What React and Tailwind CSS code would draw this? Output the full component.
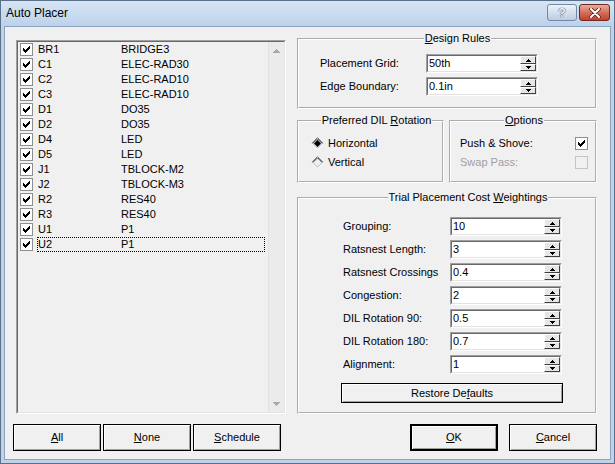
import React from 'react'

const PARTS = [
  ['BR1', 'BRIDGE3'],
  ['C1', 'ELEC-RAD30'],
  ['C2', 'ELEC-RAD10'],
  ['C3', 'ELEC-RAD10'],
  ['D1', 'DO35'],
  ['D2', 'DO35'],
  ['D4', 'LED'],
  ['D5', 'LED'],
  ['J1', 'TBLOCK-M2'],
  ['J2', 'TBLOCK-M3'],
  ['R2', 'RES40'],
  ['R3', 'RES40'],
  ['U1', 'P1'],
  ['U2', 'P1'],
]

const WEIGHTS = [
  ['Grouping:', '10'],
  ['Ratsnest Length:', '3'],
  ['Ratsnest Crossings', '0.4'],
  ['Congestion:', '2'],
  ['DIL Rotation 90:', '0.5'],
  ['DIL Rotation 180:', '0.7'],
  ['Alignment:', '1'],
]

const CHECK_PX = [[6, 0, 1], [5, 1, 2], [0, 2, 1], [4, 2, 3], [0, 3, 2], [3, 3, 3], [0, 4, 5], [1, 5, 3], [2, 6, 1]]
const UP_PX = [[2, 0, 1], [1, 1, 3], [0, 2, 5]]
const DOWN_PX = [[0, 0, 5], [1, 1, 3], [2, 2, 1]]

function Pixels({ rows, w, h, color }) {
  return (
    <svg width={w} height={h} shapeRendering="crispEdges" className="block">
      {rows.map(([x, y, wd], i) => (
        <rect key={i} x={x} y={y} width={wd} height={1} fill={color} />
      ))}
    </svg>
  )
}

function Check({ checked, disabled }) {
  return (
    <span
      className={`flex h-[13px] w-[13px] shrink-0 items-center justify-center border ${
        disabled ? 'border-[#c4c4c4] bg-[#f0f0f0]' : 'border-[#8e8f8f] bg-white'
      }`}
    >
      {checked && <Pixels rows={CHECK_PX} w={7} h={7} color="#000" />}
    </span>
  )
}

function Radio({ checked }) {
  return (
    <svg width="13" height="13" viewBox="0 0 13 13" className="block shrink-0">
      <path d="M0.5 6.5 L6.5 0.5 L12.5 6.5" fill="none" stroke="#8a8a8a" />
      <path d="M1.8 6.5 L6.5 1.8 L11.2 6.5" fill="none" stroke="#303030" />
      <path d="M0.5 6.5 L6.5 12.5 L12.5 6.5" fill="none" stroke="#ffffff" />
      <path d="M1.8 6.5 L6.5 11.2 L11.2 6.5" fill="none" stroke="#b4b4b4" />
      {checked && <path d="M6.5 3 L10 6.5 L6.5 10 L3 6.5 Z" fill="#000" />}
    </svg>
  )
}

function Spin() {
  return (
    <div className="flex w-[16px] shrink-0 flex-col">
      <div className="flex h-[8px] items-center justify-center border border-t-white border-l-white border-b-[#404040] border-r-[#404040] bg-[#e6e6e6]">
        <Pixels rows={UP_PX} w={5} h={3} color="#000" />
      </div>
      <div className="flex h-[7px] items-center justify-center border border-t-white border-l-white border-b-[#404040] border-r-[#404040] bg-[#e6e6e6]">
        <Pixels rows={DOWN_PX} w={5} h={3} color="#000" />
      </div>
    </div>
  )
}

function SpinEdit({ value }) {
  return (
    <div className="h-[19px] w-[112px] shrink-0 border border-t-[#a0a0a0] border-l-[#a0a0a0] border-b-white border-r-white">
      <div className="flex h-full border border-t-[#696969] border-l-[#696969] border-b-[#e3e3e3] border-r-[#e3e3e3] bg-white">
        <span className="flex-1 pl-[1px] leading-[15px]">{value}</span>
        <Spin />
      </div>
    </div>
  )
}

function Button({ children, className = '', isDefault }) {
  return (
    <button
      className={`flex items-center justify-center border-black bg-[#f0f0f0] font-normal leading-[13px] shadow-[inset_1px_1px_0_#fff,inset_-1px_-1px_0_#a0a0a0] ${
        isDefault ? 'border-2' : 'border'
      } ${className}`}
    >
      {children}
    </button>
  )
}

function Group({ title, className = '', children }) {
  return (
    <fieldset className={`min-w-0 [border:2px_groove_#ffffff] ${className}`}>
      <legend className="mx-auto bg-[#f0f0f0] px-[1px] font-normal leading-[13px]">{title}</legend>
      {children}
    </fieldset>
  )
}

export default function App() {
  return (
    <div className="flex h-[464px] w-[615px] flex-col overflow-hidden border border-[#5a6f88] bg-[#bed3ea] font-['Liberation_Sans',Arial,sans-serif] text-[11px] text-black">
      {/* Title bar */}
      <div className="flex h-[25px] shrink-0 items-start bg-gradient-to-b from-[#d6e5f5] to-[#bcd2ea]">
        <span className="pl-[5px] pt-[5px] text-[12px] leading-[14px]">Auto Placer</span>
        <div className="ml-auto mr-[4px] mt-[3px] flex gap-[2px]">
          <div className="flex h-[17px] w-[30px] items-center justify-center rounded-[3px] border border-[#7388a4] bg-gradient-to-b from-[#eef3f9] via-[#d3dfed] to-[#bccde3]">
            <span className="text-[13px] font-bold leading-[13px] text-[#eef3f8] [text-shadow:0_0_1px_#2d3e55,0_0_1px_#2d3e55]">?</span>
          </div>
          <div className="flex h-[17px] w-[31px] items-center justify-center rounded-[3px] border border-[#6e2a1f] bg-gradient-to-b from-[#e9ab9e] via-[#d56f5b] to-[#c4402a]">
            <svg width="12" height="10" viewBox="0 0 12 10">
              <path d="M2 1 L10 9 M10 1 L2 9" stroke="#5b1f15" strokeWidth="3.6" strokeLinecap="round" />
              <path d="M2 1 L10 9 M10 1 L2 9" stroke="#ffffff" strokeWidth="2" strokeLinecap="round" />
            </svg>
          </div>
        </div>
      </div>

      {/* Client area */}
      <div className="mx-[3px] mb-[3px] flex flex-1 flex-col border border-[#8ba3bf] bg-[#f0f0f0]">
        <div className="flex pl-[11px] pt-[5px]">
          {/* Component list */}
          <div className="mt-[8px] h-[374px] w-[270px] shrink-0 border border-t-[#a0a0a0] border-l-[#a0a0a0] border-b-white border-r-white">
            <div className="flex h-full border border-t-[#696969] border-l-[#696969] border-b-[#e3e3e3] border-r-[#e3e3e3]">
              <div className="flex-1">
                {PARTS.map(([des, fp], i) => {
                  const focused = i === PARTS.length - 1
                  return (
                    <div key={des} className="flex h-[15px] items-center pl-[2px]">
                      <Check checked />
                      <div
                        className={`ml-[4px] flex h-[15px] w-[228px] items-center border border-dotted ${
                          focused ? 'border-black' : 'border-transparent'
                        }`}
                      >
                        <span className="w-[83px] leading-[13px]">{des}</span>
                        <span className="leading-[13px]">{fp}</span>
                      </div>
                    </div>
                  )
                })}
              </div>
              <div className="flex w-[16px] shrink-0 flex-col justify-between border-l border-[#e2e2e2] bg-[#ebebeb]">
                <div className="flex h-[17px] items-center justify-center">
                  <Pixels rows={[[3, 0, 1], [2, 1, 3], [1, 2, 5], [0, 3, 7]]} w={7} h={4} color="#a8a8a8" />
                </div>
                <div className="flex h-[17px] items-center justify-center">
                  <Pixels rows={[[0, 0, 7], [1, 1, 5], [2, 2, 3], [3, 3, 1]]} w={7} h={4} color="#a8a8a8" />
                </div>
              </div>
            </div>
          </div>

          {/* Settings */}
          <div className="ml-[11px] flex w-[300px] shrink-0 flex-col">
            <Group
              title={<><u>D</u>esign Rules</>}
              className="h-[77px] pl-[21px] pt-[9px]"
            >
              <div className="flex flex-col gap-[4px]">
                <div className="flex h-[19px] items-center">
                  <span className="w-[106px]">Placement Grid:</span>
                  <SpinEdit value="50th" />
                </div>
                <div className="flex h-[19px] items-center">
                  <span className="w-[106px]">Edge Boundary:</span>
                  <SpinEdit value="0.1in" />
                </div>
              </div>
            </Group>

            <div className="mt-[5px] flex gap-[5px]">
              <Group
                title={<>Preferred DIL <u>R</u>otation</>}
                className="h-[69px] w-[147px] shrink-0 pl-[12px] pt-[7px]"
              >
                <div className="flex h-[19px] items-center gap-[4px]">
                  <Radio checked />
                  <span>Horizontal</span>
                </div>
                <div className="flex h-[19px] items-center gap-[4px]">
                  <Radio />
                  <span>Vertical</span>
                </div>
              </Group>
              <Group
                title={<><u>O</u>ptions</>}
                className="h-[69px] flex-1 pl-[9px] pr-[7px] pt-[7px]"
              >
                <div className="flex h-[19px] items-center justify-between">
                  <span>Push &amp; Shove:</span>
                  <Check checked />
                </div>
                <div className="flex h-[19px] items-center justify-between">
                  <span className="text-[#a0a0a0]">Swap Pass:</span>
                  <Check disabled />
                </div>
              </Group>
            </div>

            <Group
              title={<>Trial Placement Cost <u>W</u>eightings</>}
              className="mt-[8px] h-[223px] pl-[42px] pt-[13px]"
            >
              <div className="flex flex-col gap-[4px]">
                {WEIGHTS.map(([label, value]) => (
                  <div key={label} className="flex h-[19px] items-center pl-[2px]">
                    <span className="w-[107px]">{label}</span>
                    <SpinEdit value={value} />
                  </div>
                ))}
              </div>
              <Button className="mt-[9px] h-[20px] w-[222px]">
                <span>Restore De<u>f</u>aults</span>
              </Button>
            </Group>
          </div>
        </div>

        {/* Bottom buttons */}
        <div className="mt-[10px] flex h-[27px] pl-[8px] pr-[13px]">
          <div className="flex gap-[2px]">
            <Button className="h-[27px] w-[88px]"><span><u>A</u>ll</span></Button>
            <Button className="h-[27px] w-[88px]"><span><u>N</u>one</span></Button>
            <Button className="h-[27px] w-[88px]"><span><u>S</u>chedule</span></Button>
          </div>
          <div className="ml-auto flex gap-[11px]">
            <Button isDefault className="h-[27px] w-[88px]"><span><u>O</u>K</span></Button>
            <Button className="h-[27px] w-[88px]"><span><u>C</u>ancel</span></Button>
          </div>
        </div>
      </div>
    </div>
  )
}
